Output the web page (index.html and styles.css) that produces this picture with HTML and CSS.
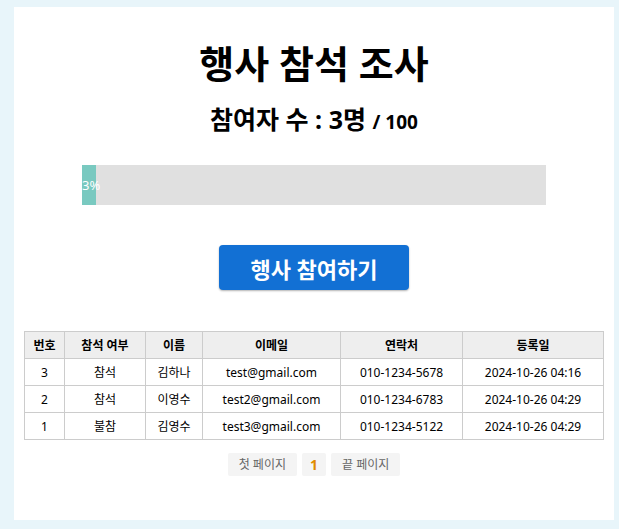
FILE: index.html
```html
<!DOCTYPE html>
<html lang="ko">
<head>
  <meta charset="UTF-8">
  <meta name="viewport" content="width=device-width, initial-scale=1.0">
  <title>행사 참석 조사</title>
  <link rel="stylesheet" href="styles.css">
</head>
<body>
  <div class="container">
    <h1 class="title">행사 참석 조사</h1>
    <h2 class="count">참여자 수 : 3명 <span class="total">/ 100</span></h2>

    <div class="progress">
      <div class="progress-bar" style="width: 3%;">3%</div>
    </div>

    <div class="join">
      <button class="join-button">행사 참여하기</button>
    </div>

    <!-- 참석자 목록 -->
    <table class="list">
      <thead>
        <tr>
          <th>번호</th>
          <th>참석 여부</th>
          <th>이름</th>
          <th>이메일</th>
          <th>연락처</th>
          <th>등록일</th>
        </tr>
      </thead>
      <tbody>
        <tr>
          <td>3</td>
          <td>참석</td>
          <td>김하나</td>
          <td>test@gmail.com</td>
          <td>010-1234-5678</td>
          <td>2024-10-26 04:16</td>
        </tr>
        <tr>
          <td>2</td>
          <td>참석</td>
          <td>이영수</td>
          <td>test2@gmail.com</td>
          <td>010-1234-6783</td>
          <td>2024-10-26 04:29</td>
        </tr>
        <tr>
          <td>1</td>
          <td>불참</td>
          <td>김영수</td>
          <td>test3@gmail.com</td>
          <td>010-1234-5122</td>
          <td>2024-10-26 04:29</td>
        </tr>
      </tbody>
    </table>

    <div class="paging">
      <a class="page-btn">첫 페이지</a>
      <a class="page-btn current">1</a>
      <a class="page-btn">끝 페이지</a>
    </div>
  </div>
</body>
</html>
```

FILE: styles.css
```css
body {
  margin: 0;
  padding: 7px 5px 9px 14px;
  background-color: #e8f5fa;
  font-family: "Noto Sans", "Noto Sans CJK KR", sans-serif;
  color: #000;
}

.container {
  width: 580px;
  height: 493px;
  padding: 10px;
  background-color: #fff;
}

.title {
  margin: 24px 0 0;
  font-size: 38px;
  line-height: 44px;
  font-weight: bold;
  text-align: center;
}

.count {
  margin: 19px 0 0;
  font-size: 25px;
  line-height: 30px;
  font-weight: bold;
  text-align: center;
}

.total {
  font-size: 19px;
}

/* 진행 막대 */
.progress {
  width: 80%;
  height: 40px;
  margin: 28px auto 0;
  background-color: #e0e0e0;
}

.progress-bar {
  height: 100%;
  background-color: #79c9c0;
  color: #fff;
  font-size: 13px;
  line-height: 40px;
  white-space: nowrap;
}

.join {
  margin-top: 40px;
  text-align: center;
}

.join-button {
  width: 190px;
  height: 45px;
  border: none;
  border-radius: 4px;
  background-color: #1270d4;
  box-shadow: 0 1px 2px rgba(0, 0, 0, 0.3);
  color: #fff;
  font-family: inherit;
  font-size: 22px;
  font-weight: bold;
  cursor: pointer;
}

/* 목록 */
.list {
  width: 100%;
  margin-top: 41px;
  border-collapse: collapse;
  font-size: 12px;
}

.list th,
.list td {
  height: 26px;
  padding: 0 6px;
  border: 1px solid #ccc;
  text-align: center;
  white-space: nowrap;
}

.list th {
  background-color: #eee;
  font-weight: bold;
}

.list th:nth-child(1) { width: 27px; }
.list th:nth-child(2) { width: 68px; }
.list th:nth-child(3) { width: 44px; }
.list th:nth-child(4) { width: 125px; }
.list th:nth-child(5) { width: 109px; }

.paging {
  display: flex;
  justify-content: center;
  gap: 5px;
  margin-top: 13px;
}

.page-btn {
  padding: 0 11px;
  height: 23px;
  line-height: 23px;
  border-radius: 2px;
  background-color: #f4f4f4;
  color: #666;
  font-size: 12px;
  cursor: pointer;
}

.page-btn.current {
  padding: 0 8px;
  color: #e08a00;
  font-size: 14px;
  font-weight: bold;
}
```
